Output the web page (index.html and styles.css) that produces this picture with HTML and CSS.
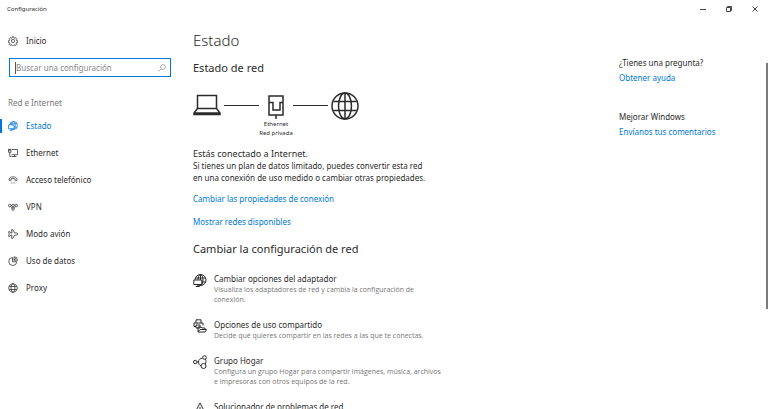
FILE: index.html
```html
<!DOCTYPE html>
<html lang="es">
<head>
  <meta charset="utf-8">
  <title>Configuración</title>
  <meta name="viewport" content="width=device-width, initial-scale=1.0">
  <link rel="stylesheet" href="styles.css">
</head>
<body>

  <header class="titlebar">
    <span class="titlebar-name">Configuración</span>
    <div class="window-buttons">
      <button type="button" aria-label="Minimizar"><svg width="8" height="8" viewBox="0 0 8 8"><path d="M1 4.500h6"/></svg></button>
      <button type="button" aria-label="Restaurar"><svg width="8" height="8" viewBox="0 0 8 8"><path d="M1.500 2.500h4v4h-4zM2.500 2.500v-1h4v4h-1"/></svg></button>
      <button type="button" aria-label="Cerrar"><svg width="8" height="8" viewBox="0 0 8 8"><path d="M1.500 1.500l5 5M6.500 1.500l-5 5"/></svg></button>
    </div>
  </header>

  <div class="layout">
    <aside class="sidebar">
      <a href="#" class="nav-link home">
        <svg class="icon" viewBox="0 0 20 20"><path d="M8.500 1.500h3l.5 2.500 1.500.7 2.200-1.400 2 2-1.400 2.200.7 1.500 2.500.5v3l-2.500.5-.7 1.500 1.400 2.200-2 2-2.200-1.400-1.500.7-.5 2.500h-3l-.5-2.500-1.500-.7-2.200 1.400-2-2 1.400-2.200-.7-1.500-2.500-.5v-3l2.500-.5.7-1.500-1.400-2.200 2-2 2.200 1.400 1.500-.7z"/><circle cx="10" cy="10" r="3.200"/></svg>
        Inicio
      </a>

      <form class="search">
        <input type="text" aria-label="Buscar una configuración" placeholder="Buscar una configuración">
        <svg class="search-icon" viewBox="0 0 8 8"><circle cx="5" cy="3" r="2.400"/><path d="M3.300 4.700L.5 7.500"/></svg>
      </form>

      <h2 class="nav-title">Red e Internet</h2>
      <nav>
        <a href="#" class="nav-link active">
          <svg class="icon" viewBox="0 0 20 20"><circle cx="11" cy="9" r="8"/><ellipse cx="11" cy="9" rx="3.500" ry="8"/><path d="M4 5.500h14M11 12h7"/><path class="screen" d="M1 8h11v7.500H1z"/><path d="M6.500 15.500v3M3.500 18.500h6"/></svg>
          Estado
        </a>
        <a href="#" class="nav-link">
          <svg class="icon" viewBox="0 0 20 20"><path d="M8 3h11v10.500H7M13 13.500V17M7 17h10M1 2.500h5v6H1zM3.500 8.500V17H6M2.500 2.500v3M4.500 2.500v3"/></svg>
          Ethernet
        </a>
        <a href="#" class="nav-link">
          <svg class="icon" viewBox="0 0 20 20"><path d="M2 9c0-7 16-7 16 0v1.500h-4V8c-2-1.200-6-1.200-8 0v2.500H2z"/><path class="faint" d="M6.500 13v5M10 13v5M13.500 13v5"/></svg>
          Acceso telefónico
        </a>
        <a href="#" class="nav-link">
          <svg class="icon" viewBox="0 0 20 20"><circle cx="3.500" cy="7" r="2.500"/><circle cx="10" cy="7" r="2.500"/><circle cx="16.500" cy="7" r="2.500"/><circle cx="10" cy="14" r="2.500"/><path d="M6 7h1.500M12.500 7H14M10 9.500v2M5 9l3 3.500M15 9l-3 3.500"/></svg>
          VPN
        </a>
        <a href="#" class="nav-link">
          <svg class="icon" viewBox="0 0 20 20"><path d="M19 10c0-1.500-1-2.200-2.500-2.200H13L10 1.500H7l1 6.300H5.500L4 5.500H1l1.500 4.500L1 14.500h3l1.500-2.300H8l-1 6.300h3l3-6.300h3.500c1.500 0 2.500-.7 2.500-2.200z"/></svg>
          Modo avión
        </a>
        <a href="#" class="nav-link">
          <svg class="icon" viewBox="0 0 20 20"><path d="M9 3a8 8 0 1 0 8.500 8.500H9zM12 1.500V8.500h7A7 7 0 0 0 12 1.500zM12 8.500l4.500-5"/></svg>
          Uso de datos
        </a>
        <a href="#" class="nav-link">
          <svg class="icon" viewBox="0 0 20 20"><circle cx="10" cy="10" r="8.500"/><ellipse cx="10" cy="10" rx="4" ry="8.500"/><path d="M2.500 7h15M2.500 13h15"/></svg>
          Proxy
        </a>
      </nav>
    </aside>

    <main class="content">
      <h1>Estado</h1>
      <h2>Estado de red</h2>

      <div class="diagram">
        <svg class="diagram-icon" viewBox="0 0 28 28"><path d="M4.500 3.500h19v13h-19zM4.500 16.500L1 21v1.500h26V21l-3.500-4.500M1 21h26"/></svg>
        <span class="wire"></span>
        <div class="node">
          <svg class="diagram-icon" viewBox="0 0 28 28"><path d="M7 4h14v19H7zM7 10.500h4v7.500h7v-7.500H21M14 23v4"/></svg>
          <span>Ethernet</span>
          <span>Red privada</span>
        </div>
        <span class="wire"></span>
        <svg class="diagram-icon globe" viewBox="0 0 28 28"><circle cx="14" cy="14" r="13"/><ellipse cx="14" cy="14" rx="6.500" ry="13"/><path d="M2.500 9.500h23M2.500 18.500h23M14 1v26"/></svg>
      </div>

      <h3>Estás conectado a Internet.</h3>
      <p class="status-text">Si tienes un plan de datos limitado, puedes convertir esta red<br>en una conexión de uso medido o cambiar otras propiedades.</p>
      <a href="#" class="link">Cambiar las propiedades de conexión</a>
      <a href="#" class="link">Mostrar redes disponibles</a>

      <h2 class="change-title">Cambiar la configuración de red</h2>

      <a href="#" class="option">
        <svg class="option-icon" viewBox="0 0 14 14"><circle cx="7.500" cy="7" r="5.500"/><ellipse cx="7.500" cy="7" rx="2.500" ry="5.500"/><path d="M2.500 5h10M7 9h5.500M7.500 1.500v6"/><path class="screen" d="M.8 7h8v4.500h-8z"/><path d="M4.800 11.500v2M2.800 13.500h4"/></svg>
        <div>
          <h4>Cambiar opciones del adaptador</h4>
          <p>Visualiza los adaptadores de red y cambia la configuración de<br>conexión.</p>
        </div>
      </a>
      <a href="#" class="option">
        <svg class="option-icon" viewBox="0 0 14 14"><path d="M3 4V.8h5V4M3 7.500H1V4h9v2.500M3 6h4v3H3zM5 13V8h3l1 1h3v1.500M5 13l2-2.500h6.500L12 13z"/></svg>
        <div>
          <h4>Opciones de uso compartido</h4>
          <p>Decide qué quieres compartir en las redes a las que te conectas.</p>
        </div>
      </a>
      <a href="#" class="option">
        <svg class="option-icon" viewBox="0 0 14 14"><circle cx="2.200" cy="7" r="1.700"/><circle cx="11.500" cy="2.500" r="1.800"/><circle cx="10.500" cy="11" r="2.500"/><path d="M4 7h1.500M9.700 3C7 3.500 5.500 5 5.500 7s1 3.300 2.500 3.800M12.500 4.200c.8 1.800.6 3.600-.5 4.800"/></svg>
        <div>
          <h4>Grupo Hogar</h4>
          <p>Configura un grupo Hogar para compartir imágenes, música, archivos<br>e impresoras con otros equipos de la red.</p>
        </div>
      </a>
      <a href="#" class="option">
        <svg class="option-icon" viewBox="0 0 14 14"><path d="M7 2l5.500 10.500h-11zM7 6v3.500M7 10.500v1"/></svg>
        <div>
          <h4>Solucionador de problemas de red</h4>
        </div>
      </a>
    </main>

    <aside class="help">
      <h3>¿Tienes una pregunta?</h3>
      <a href="#">Obtener ayuda</a>
      <h3>Mejorar Windows</h3>
      <a href="#">Envíanos tus comentarios</a>
    </aside>

    <div class="scrollbar"><div class="thumb"></div></div>
  </div>

</body>
</html>
```
FILE: styles.css
```css
* {
  box-sizing: border-box;
}

body {
  margin: 0;
  height: 100vh;
  display: flex;
  flex-direction: column;
  overflow: hidden;
  background-color: #fff;
  color: #2b2b2b;
  font-family: "Noto Sans", "Open Sans", sans-serif;
  font-size: 8px;
  line-height: 12px;
}

h1, h2, h3, h4, p {
  margin: 0;
  font-weight: normal;
}

a {
  color: #0078d7;
  text-decoration: none;
}

svg {
  flex: none;
  fill: none;
  stroke: currentColor;
}

.titlebar {
  display: flex;
  flex: none;
  justify-content: space-between;
  align-items: center;
  height: 18px;
  padding-left: 7px;
}

.titlebar-name {
  font-size: 6px;
}

.window-buttons {
  display: flex;
}

.window-buttons button {
  display: flex;
  align-items: center;
  justify-content: center;
  width: 26px;
  height: 18px;
  padding: 0;
  border: none;
  background: none;
  color: #444;
}

.layout {
  display: flex;
  flex: 1;
  min-height: 0;
}

.sidebar {
  flex: none;
  width: 25%;
  padding-top: 9px;
}

.nav-link {
  display: flex;
  align-items: center;
  gap: 8px;
  height: 27px;
  padding-left: 8px;
  color: #2b2b2b;
}

.icon {
  width: 10px;
  height: 10px;
  stroke-width: 1.5;
}

.faint {
  opacity: 0.4;
}

.screen {
  fill: #fff;
}

.nav-link.active {
  position: relative;
  color: #0078d7;
}

.nav-link.active::before {
  content: "";
  position: absolute;
  left: 0;
  width: 2px;
  height: 14px;
  background-color: #0078d7;
}

.search {
  display: flex;
  align-items: center;
  height: 19px;
  margin: 4px 21px 0 9px;
  padding: 0 4px 0 5px;
  border: 1px solid #0078d7;
}

.search input {
  flex: 1;
  min-width: 0;
  height: 12px;
  padding: 0;
  border: none;
  border-left: 1px solid #555;
  outline: none;
  font: inherit;
}

.search input::placeholder {
  color: #8a8a8a;
}

.search-icon {
  width: 8px;
  height: 8px;
  color: #999;
  stroke-width: 0.8;
}

.nav-title {
  margin: 20px 0 3px 8px;
  color: #777;
  font-size: 8px;
}

.content {
  flex: 1;
  padding: 11px 0 0 1px;
  overflow: hidden;
}

h1 {
  font-size: 15px;
  font-weight: 300;
  line-height: 22px;
}

.content h2 {
  margin-top: 8px;
  font-size: 11px;
  line-height: 18px;
}

.diagram {
  display: flex;
  margin-top: 15px;
}

.diagram-icon {
  width: 28px;
  height: 28px;
  stroke-width: 1.5;
}

.wire {
  width: 35px;
  height: 1px;
  margin-top: 13px;
  background-color: #2b2b2b;
}

.diagram-icon + .wire,
.globe {
  margin-left: 3px;
}

.node {
  display: flex;
  flex-direction: column;
  align-items: center;
  width: 34px;
  font-size: 6px;
  line-height: 9px;
  white-space: nowrap;
}

.content h3 {
  margin-top: 10px;
  font-size: 9px;
}

.status-text {
  margin-bottom: 9px;
}

.link {
  display: table;
  margin-bottom: 11px;
}

.content .change-title {
  margin: 12px 0 15px;
}

.option {
  display: flex;
  gap: 7px;
  margin-bottom: 14px;
  color: #2b2b2b;
}

.option-icon {
  width: 14px;
  height: 14px;
}

.option p {
  color: #777;
  font-family: "Open Sans", "Noto Sans", sans-serif;
  font-size: 7px;
  line-height: 10px;
}

.help {
  width: 147px;
  padding-top: 39px;
}

.help h3 {
  font-size: 8px;
}

.help a {
  display: table;
  margin: 3px 0 27px;
}

.scrollbar {
  width: 2px;
  padding-top: 45px;
}

.thumb {
  height: 71%;
  background-color: #7a7a7a;
}
```
